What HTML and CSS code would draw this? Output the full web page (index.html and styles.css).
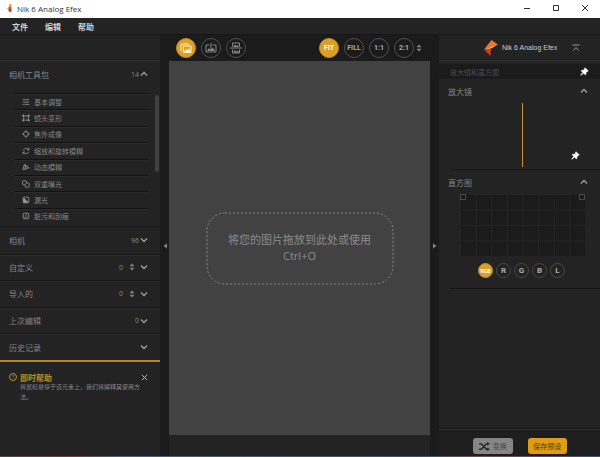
FILE: index.html
```html
<!DOCTYPE html>
<html lang="zh-CN">
<head>
    <meta charset="UTF-8">
    <meta name="viewport" content="width=device-width, initial-scale=1.0">
    <title>Nik 6 Analog Efex</title>
    <link rel="stylesheet" href="styles.css">
</head>
<body>
    <svg class="sprite" aria-hidden="true">
        <symbol id="up" viewBox="0 0 8 8"><path d="M1 5.5 4 2.5 7 5.5" fill="none" stroke="currentColor" stroke-width="1.3"/></symbol>
        <symbol id="down" viewBox="0 0 8 8"><path d="M1 2.5 4 5.5 7 2.5" fill="none" stroke="currentColor" stroke-width="1.3"/></symbol>
        <symbol id="sort" viewBox="0 0 6 8"><path d="M.5 3.2 3 .4 5.5 3.2zM.5 4.8 3 7.6 5.5 4.8z" fill="currentColor"/></symbol>
        <symbol id="close" viewBox="0 0 8 8"><path d="M1 1 7 7M7 1 1 7" fill="none" stroke="currentColor"/></symbol>
        <symbol id="pin" viewBox="0 0 10 10"><path d="M5.5.8 9.2 4.2 8.3 5 7.8 4.9 6.7 6.3 6.7 8 5.9 8.7 3.9 6.9 1 9.3.7 9 3.1 6.1 1.3 4.2 2 3.5 3.8 3.5 5.2 2.2 4.9 1.5z" fill="#fff" stroke="#fff" stroke-width=".6"/></symbol>
        <symbol id="logo" viewBox="0 0 14 16">
            <path d="M7.5 0 14 4.5 0 9.5z" fill="#e8792c"/>
            <path d="M14 4.5 7 8.5 0 9.5z" fill="#f8cf9a"/>
            <path d="M0 9.5 7 8.5 6.5 16z" fill="#d9362c"/>
        </symbol>
    </svg>

    <header class="titlebar">
        <svg class="app-icon" viewBox="0 0 8 10">
            <circle cx="5" cy="1.8" r="1.6" fill="#e88a4a"/>
            <path d="M3 3 6 3.5 6.5 8 4.5 9.5 2.5 7z" fill="#c9442f"/>
            <path d="M.5 4 3 5 2.5 7z" fill="#e9b36d"/>
        </svg>
        <span class="title">Nik 6 Analog Efex</span>
        <div class="window-buttons">
            <button aria-label="最小化"><svg viewBox="0 0 8 8"><path d="M1 4.5H7" stroke="#333"/></svg></button>
            <button aria-label="最大化"><svg viewBox="0 0 8 8"><path d="M1.5 1.5h5v5h-5z" fill="none" stroke="#333"/></svg></button>
            <button aria-label="关闭"><svg viewBox="0 0 8 8"><use href="#close"/></svg></button>
        </div>
    </header>

    <nav class="menu">
        <button>文件</button>
        <button>编辑</button>
        <button>帮助</button>
    </nav>

    <div class="workspace">
        <aside class="sidebar">
            <div class="panel-head"></div>
            <button class="section-title">相机工具包<span class="count">14</span><svg class="arrow"><use href="#up"/></svg></button>
            <div class="tools">
                <ul class="tool-list">
                    <li><button><svg viewBox="0 0 10 10"><path d="M1 2h3M6 2h3M1 5h5M8 5h1M1 8h2M5 8h4M5 1v2M7 4v2M4 7v2"/></svg>基本调整</button></li>
                    <li><button><svg viewBox="0 0 10 10"><path d="M2 2Q5 3 8 2Q7.5 5 8 8Q5 7 2 8Q2.5 5 2 2z"/><path class="solid" d="M.5 1h2v2h-2zM7.5 1h2v2h-2zM.5 7h2v2h-2zM7.5 7h2v2h-2z"/></svg>镜头变形</button></li>
                    <li><button><svg viewBox="0 0 10 10"><circle cx="5" cy="5" r="3"/><path class="solid" d="M3.5 2 5 .3 6.5 2zM3.5 8 5 9.7 6.5 8zM2 3.5.3 5 2 6.5zM8 3.5 9.7 5 8 6.5z"/></svg>焦外成像</button></li>
                    <li><button><svg viewBox="0 0 10 10"><path d="M1.5 4Q3 1.5 5.5 1.6 7.5 1.8 8.5 3.5M8.5 6Q7 8.5 4.5 8.4 2.5 8.2 1.5 6.5M8.7 1v2.7H6.3M1.3 9V6.3H3.7"/></svg>缩放和旋转模糊</button></li>
                    <li><button><svg viewBox="0 0 10 10"><path d="M1 8 3 2 4.5 2 3.5 8zM5 8V3L9 6 6.5 6.5z"/></svg>动态模糊</button></li>
                    <li><button><svg viewBox="0 0 10 10"><path d="M3.5 6H1.5Q.8 6 .8 5.3V1.7Q.8 1 1.5 1H5Q5.7 1 5.7 1.7V3.5M4.5 3.8H8.3Q9 3.8 9 4.5V8.2Q9 9 8.3 9H4.7Q4 9 4 8.2V4.5"/></svg>双重曝光</button></li>
                    <li><button><svg viewBox="0 0 10 10"><rect x="1.5" y="1.5" width="7" height="7" rx="1"/><path class="solid" d="M1.5 8.5V3H4Q4 6 7 6V8.5z"/></svg>漏光</button></li>
                    <li><button><svg viewBox="0 0 10 10"><rect x="1.5" y="1.5" width="7" height="7" rx="1"/><path d="M3 6.5H7M4 4.5 6.5 3"/></svg>脏污和刮痕</button></li>
                </ul>
                <div class="scrollbar"></div>
            </div>
            <div class="sections">
                <button>相机<span class="count">96</span><svg class="arrow"><use href="#down"/></svg></button>
                <button>自定义<span class="count">0</span><svg class="sort"><use href="#sort"/></svg><svg class="arrow"><use href="#down"/></svg></button>
                <button>导入的<span class="count">0</span><svg class="sort"><use href="#sort"/></svg><svg class="arrow"><use href="#down"/></svg></button>
                <button>上次编辑<span class="count">0</span><svg class="arrow"><use href="#down"/></svg></button>
                <button>历史记录<span class="count"></span><svg class="arrow"><use href="#down"/></svg></button>
            </div>
            <div class="help">
                <div class="help-title">
                    <span class="help-mark">?</span>
                    <h2>即时帮助</h2>
                    <button aria-label="关闭"><svg viewBox="0 0 8 8"><use href="#close"/></svg></button>
                </div>
                <p>将鼠标悬停于该元素上，我们将解释其使用方法。</p>
            </div>
        </aside>

        <button class="gutter" aria-label="左侧面板"><svg viewBox="0 0 4 6"><path d="M4 .5V5.5L.5 3z"/></svg></button>

        <main class="center">
            <div class="toolbar">
                <button class="round active" aria-label="单图"><svg viewBox="0 0 12 12"><path d="M2 8.5H1V2.5L8 1.5V3M3.5 4H11V10.5H3.5z"/><path class="solid" d="M4 10 6 7 7.5 8.5 9 6 10.8 10z"/></svg></button>
                <button class="round" aria-label="分割"><svg viewBox="0 0 12 12"><path d="M4.5 3H1V10H4.5M7.5 3H11V10H7.5M6 1v10"/><path class="solid" d="M2 9 4 6 5.5 8 8 5.5 10 9z"/></svg></button>
                <button class="round" aria-label="并排"><svg viewBox="0 0 12 12"><path d="M2.5 4.5V1H9.500V4.500M2.500 7.500V11H9.500V7.500M0 6h12"/><path class="solid" d="M3 5 5 2.5 6.5 4 8 3 9 5zM3 10.500 5 8 6.500 9.500 8 8.500 9 10.500z"/></svg></button>
                <div class="zoom">
                    <button class="round active">FIT</button>
                    <button class="round">FILL</button>
                    <button class="round">1:1</button>
                    <button class="round">2:1</button>
                </div>
                <svg class="sort"><use href="#sort"/></svg>
            </div>
            <div class="canvas">
                <div class="drop">
                    <svg class="drop-border"><rect x="0" y="0" width="100%" height="100%" rx="18"/></svg>
                    <p>将您的图片拖放到此处或使用<br>Ctrl+O</p>
                </div>
            </div>
            <div class="statusbar"></div>
        </main>

        <button class="gutter" aria-label="右侧面板"><svg viewBox="0 0 4 6"><path d="M0 .5V5.5L3.5 3z"/></svg></button>

        <aside class="inspector">
            <div class="panel-head brand">
                <svg class="logo"><use href="#logo"/></svg>
                <span>Nik 6 Analog Efex</span>
                <button aria-label="折叠"><svg viewBox="0 0 8 8"><path d="M.5 1H7.5M1.5 6.5 4 3.5 6.5 6.5" fill="none" stroke="currentColor"/></svg></button>
            </div>
            <div class="group-title">放大镜和直方图<svg class="pin"><use href="#pin"/></svg></div>
            <button class="section-title">放大镜<svg class="arrow"><use href="#up"/></svg></button>
            <div class="loupe">
                <div class="split"></div>
                <svg class="pin"><use href="#pin"/></svg>
            </div>
            <button class="section-title histogram-title">直方图<svg class="arrow"><use href="#up"/></svg></button>
            <div class="histogram">
                <svg>
                    <defs>
                        <pattern id="cells" width="12.5%" height="25%">
                            <path d="M0 .5H40M.5 0V40" stroke="#242424"/>
                        </pattern>
                    </defs>
                    <rect width="100%" height="100%" fill="url(#cells)"/>
                </svg>
                <i class="clip left"></i>
                <i class="clip right"></i>
            </div>
            <div class="channels">
                <button class="active">RGB</button>
                <button>R</button>
                <button>G</button>
                <button>B</button>
                <button>L</button>
            </div>
            <div class="filler"></div>
            <div class="actions">
                <button class="brush"><svg viewBox="0 0 12 10"><path d="M0 2H2.5L8 8H10M0 8H2.5L8 2H10" fill="none" stroke="#222" stroke-width="1.5"/><path d="M9 0 12 2 9 4zM9 6 12 8 9 10z" fill="#222"/></svg>变换</button>
                <button class="save">保存预设</button>
            </div>
        </aside>
    </div>
    <div class="taskbar"></div>
</body>
</html>
```
FILE: styles.css
```css
* {
    margin: 0;
    padding: 0;
    box-sizing: border-box;
}

body {
    font-family: "Open Sans", "Noto Sans CJK SC", sans-serif;
    font-size: 8px;
    display: flex;
    flex-direction: column;
    height: 100vh;
    overflow: hidden;
    background-color: #1b1b1b;
    color: #858585;
}

button {
    font: inherit;
    color: inherit;
    background: none;
    border: none;
    text-align: left;
}

svg {
    display: block;
    flex-shrink: 0;
}

.sprite {
    position: absolute;
    width: 0;
    height: 0;
}

.titlebar {
    display: flex;
    align-items: center;
    height: 18px;
    padding: 0 11px 2px 6px;
    background-color: #fff;
    color: #333;
}

.app-icon {
    width: 7px;
    height: 9px;
    margin-right: 4px;
}

.window-buttons {
    display: flex;
    gap: 21px;
    margin-left: auto;
}

.window-buttons svg {
    width: 8px;
    height: 8px;
}

.menu {
    display: flex;
    align-items: center;
    gap: 17px;
    height: 17px;
    padding-left: 12px;
    background-color: #232323;
    border-bottom: 1px solid #171717;
    color: #d0d0d0;
    font-weight: bold;
}

.workspace {
    display: flex;
    flex: 1;
    min-height: 0;
}

.sidebar,
.inspector {
    display: flex;
    flex-direction: column;
    width: 161px;
    background-color: #232323;
}

.sidebar {
    width: 160px;
}

.panel-head {
    height: 26px;
    border-bottom: 1px solid #343434;
    box-shadow: inset 0 -1px #191919;
}

.section-title {
    display: flex;
    align-items: center;
    height: 26px;
    padding: 0 12px 0 9px;
}

.arrow {
    width: 8px;
    height: 8px;
    margin-left: auto;
    color: #a0a0a0;
}

.sort {
    width: 6px;
    height: 8px;
    color: #858585;
}

.count {
    margin-left: auto;
    font-size: 7px;
}

.count + .arrow {
    margin-left: 1px;
}

.count + .sort {
    margin: 0 5px 0 6px;
}

.sort + .arrow {
    margin-left: 0;
}

.tools {
    display: flex;
    justify-content: space-between;
    height: 140px;
    padding: 6px 1px 2px 15px;
    border-bottom: 1px solid #171717;
}

.tool-list {
    display: flex;
    flex-direction: column;
    width: 133px;
    list-style: none;
    font-size: 7px;
}

.tool-list li {
    flex: 1;
    display: flex;
    border-top: 1px solid #121212;
    box-shadow: inset 0 1px #2b2b2b;
}

.tool-list button {
    display: flex;
    align-items: center;
    width: 100%;
    gap: 4px;
    padding-left: 7px;
}

.tool-list svg {
    width: 8px;
    height: 8px;
    fill: none;
    stroke: #999;
}

.tool-list .solid {
    fill: #999;
    stroke: none;
}

.scrollbar {
    width: 4px;
    height: 77px;
    margin-top: 2px;
    border-radius: 2px;
    background-color: #424242;
}

.sections {
    display: grid;
    grid-auto-rows: 1fr;
    height: 133px;
}

.sections button {
    display: flex;
    align-items: center;
    padding: 0 12px 0 9px;
}

.sections button + button {
    border-top: 1px solid #161616;
    box-shadow: inset 0 1px #2b2b2b;
}

.help {
    flex: 1;
    padding: 10px 12px 0 9px;
    border-top: 2px solid #b98718;
}

.help-title {
    display: flex;
    align-items: center;
    gap: 3px;
    height: 10px;
    color: #c08f20;
}

.help-title h2 {
    font-size: 8px;
}

.help-mark {
    width: 8px;
    height: 8px;
    border: 1px solid #c08f20;
    border-radius: 50%;
    font-size: 6px;
    line-height: 6px;
    text-align: center;
}

.help-title button {
    margin-left: auto;
    color: #ccc;
}

.help-title button svg {
    width: 7px;
    height: 7px;
}

.help p {
    padding: 0 7px 0 11px;
    font-size: 6px;
    line-height: 10px;
}

.gutter {
    display: flex;
    align-items: center;
    justify-content: center;
    width: 9px;
    background-color: #1b1b1b;
}

.gutter svg {
    width: 4px;
    height: 6px;
    fill: #858585;
}

.center {
    flex: 1;
    display: flex;
    flex-direction: column;
}

.toolbar {
    display: flex;
    align-items: center;
    gap: 5px;
    height: 26px;
    padding: 0 8px 0 7px;
    background-color: #1b1b1b;
}

.zoom {
    display: flex;
    gap: 5px;
    margin-left: auto;
}

.toolbar > .sort {
    margin-left: -3px;
}

.round {
    display: flex;
    align-items: center;
    justify-content: center;
    width: 20px;
    height: 20px;
    border: 1px solid #505050;
    border-radius: 50%;
    font: bold 7px Roboto, sans-serif;
    color: #aaa;
}

.round svg {
    width: 12px;
    height: 12px;
    fill: none;
    stroke: #888;
}

.round .solid {
    fill: #888;
    stroke: none;
}

.round.active {
    background-color: #dca025;
    border-color: #c18d22;
    color: #fff;
}

.round.active svg {
    stroke: #fff3cf;
}

.round.active .solid {
    fill: #fff3cf;
}

.canvas {
    flex: 1;
    display: flex;
    align-items: center;
    justify-content: center;
    background-color: #424242;
}

.drop {
    display: grid;
    grid-template-rows: 100%;
    width: 186px;
    height: 71px;
}

.drop-border,
.drop p {
    grid-area: 1 / 1;
}

.drop-border {
    width: 100%;
    height: 100%;
    overflow: visible;
    fill: none;
    stroke: #858585;
    stroke-dasharray: 2 2;
}

.drop p {
    place-self: center;
    font-size: 11px;
    line-height: 16px;
    text-align: center;
    color: #8c8c8c;
}

.statusbar {
    height: 21px;
    background-color: #232323;
}

.brand {
    display: flex;
    align-items: center;
    padding: 0 20px 0 45px;
    color: #ccc;
}

.brand span {
    font-family: "Liberation Sans", sans-serif;
    font-size: 7px;
    margin-left: 4px;
}

.brand .logo {
    width: 14px;
    height: 16px;
}

.brand button {
    margin-left: auto;
    color: #999;
}

.brand button svg {
    width: 8px;
    height: 8px;
}

.group-title {
    display: flex;
    align-items: center;
    justify-content: space-between;
    height: 15px;
    margin-top: 3px;
    padding: 0 11px;
    background-color: #1b1b1b;
    font-size: 7px;
    color: #4c4c4c;
}

.pin {
    width: 9px;
    height: 9px;
}

.loupe {
    position: relative;
    display: flex;
    justify-content: center;
    height: 67px;
    margin-left: 12px;
    padding-right: 6px;
    border-bottom: 1px solid #171717;
}

.split {
    width: 1px;
    height: 64px;
    background-color: #c2953c;
}

.loupe .pin {
    position: absolute;
    right: 20px;
    bottom: 9px;
}

.inspector .section-title {
    height: 24px;
}

.histogram {
    position: relative;
    height: 62px;
    margin: 0 15px 0 21px;
    background-color: #1b1b1b;
}

.histogram > svg {
    width: 100%;
    height: 100%;
}

.clip {
    position: absolute;
    top: 0;
    width: 6px;
    height: 6px;
    border: 1px solid #484848;
}

.left {
    left: 0;
}

.right {
    right: 0;
}

.channels {
    display: flex;
    justify-content: center;
    gap: 3px;
    height: 33px;
    margin-left: 12px;
    padding: 7px 8px 0 0;
    border-bottom: 1px solid #151515;
}

.channels button {
    width: 15px;
    height: 15px;
    border: 1px solid #484848;
    border-radius: 50%;
    font: bold 8px Roboto, sans-serif;
    text-align: center;
    color: #aaa;
}

.channels .active {
    background-color: #dca025;
    border-color: #c18d22;
    font-size: 5px;
    color: #fff;
}

.filler {
    flex: 1;
}

.actions {
    display: flex;
    gap: 15px;
    height: 27px;
    padding: 8px 33px 2px 34px;
    background-color: #1e1e1e;
    border-top: 1px solid #343434;
    box-shadow: 0 -1px #151515;
}

.actions button {
    flex: 1;
    display: flex;
    align-items: center;
    justify-content: center;
    gap: 3px;
    border-radius: 3px;
    font-size: 7px;
    white-space: nowrap;
}

.actions svg {
    width: 11px;
    height: 9px;
}

.brush {
    background-color: #858585;
    color: #444;
}

.save {
    background-color: #e09c15;
    color: #4a3608;
}

.taskbar {
    height: 1px;
    background: linear-gradient(90deg, #54454e, #7c3a3e 12%, #456580 20%, #35566b 70%, #7c4a56 80%, #3d5378);
}
```
